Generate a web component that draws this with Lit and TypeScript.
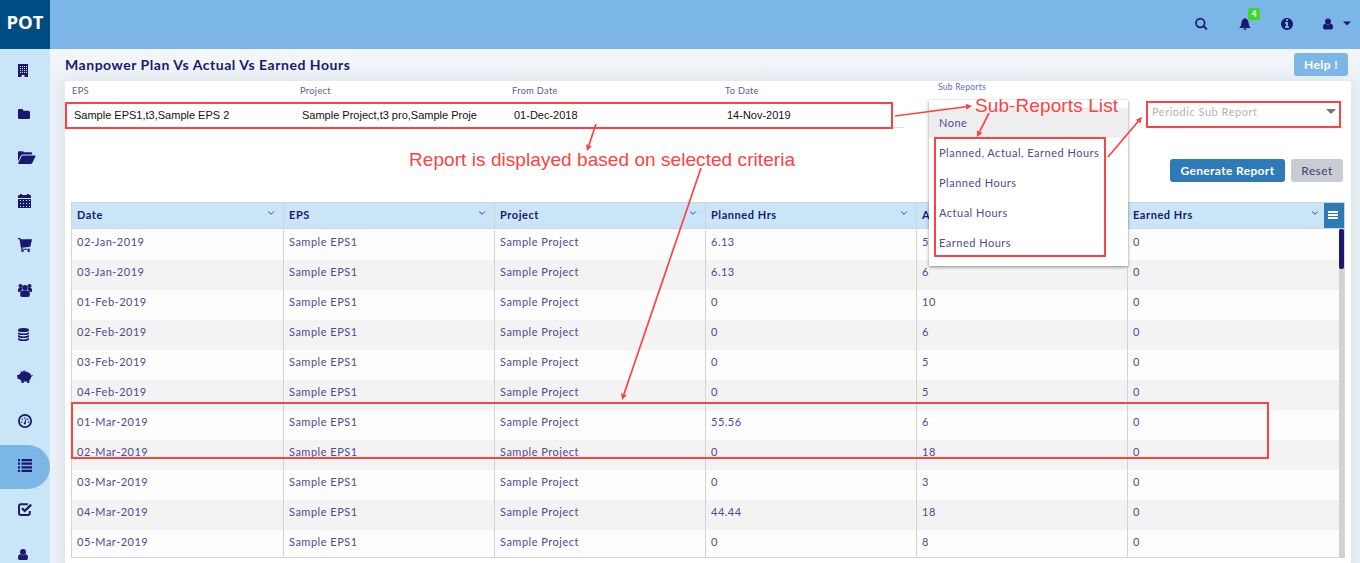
import { LitElement, html, css, svg } from "lit";
import { customElement } from "lit/decorators.js";

const icons = {
  building: svg`<path fill-rule="evenodd" d="M3 3h10v13H9.500v-2h-3v2H3zM5 5v1h1V5zm2 0v1h1V5zm2 0v1h1V5zm2 0v1h1V5zM5 7v1h1V7zm2 0v1h1V7zm2 0v1h1V7zm2 0v1h1V7zM5 9v1h1V9zm2 0v1h1V9zm2 0v1h1V9zm2 0v1h1V9zM5 11v1h1v-1zm2 0v1h1v-1zm2 0v1h1v-1zm2 0v1h1v-1z"/>`,
  folder: svg`<path d="M3 5.300Q3 4 4.300 4h2.600Q8.200 4 8.200 5.300V5.700h5.300Q15 5.700 15 7.200v5.300Q15 14 13.500 14h-9Q3 14 3 12.500z"/>`,
  folderOpen: svg`<path d="M3 12.300V3.500Q3 2.300 4.200 2.300h3.300Q8.700 2.300 8.700 3.300h7.100Q17.200 3.300 17.200 4.500v1H8Q6.500 5.500 5.800 6.700z"/><path d="M7.800 6.600h12.100q1 0 .5 1l-3 6.200q-.5 1.100-1.700 1.100H3.800q-1 0-.5-1l3-6.200q.5-1.100 1.500-1.100z"/>`,
  calendar: svg`<path fill-rule="evenodd" d="M3 3Q3 2 4 2h1V1h2v1h5V1h2v1h1q1 0 1 1v2H3zM3 6h13v9H3zM5 7v1h1V7zm3 0v1h1V7zm3 0v1h1V7zm3 0v1h1V7zM5 10v1h1v-1zm3 0v1h1v-1zm3 0v1h1v-1zm3 0v1h1v-1zM5 13v1h1v-1zm3 0v1h1v-1zm3 0v1h1v-1zm3 0v1h1v-1z"/>`,
  cart: svg`<path d="M3 1h2.300l.5 1.300H17l-1.700 7.400L7 10.700l.3 1H15v1H6.300L4.500 2.200H3z"/><circle cx="7.500" cy="13.900" r="1.200"/><circle cx="13.700" cy="13.900" r="1.200"/>`,
  users: svg`<circle cx="5.500" cy="5" r="2"/><circle cx="14.500" cy="5" r="2"/><path d="M3 10V8.500q0-1.500 1.500-1.500H7v2q-1.300.5-1.700 2H4Q3 11 3 10zm14 0V8.500Q17 7 15.500 7H13v2q1.300.5 1.700 2H16q1 0 1-1z"/><circle cx="10" cy="6.700" r="2.800"/><path d="M5.200 14v-1.500q0-3 2.500-3h4.600q2.500 0 2.500 3V14q0 2-1.800 2H7q-1.800 0-1.800-2z"/>`,
  database: svg`<path d="M3 5q0-2 5.500-2T14 5v.6q0 1.500-5.500 1.500T3 5.600zM3 7.200q2 1.400 5.500 1.400T14 7.200v1.300q0 1.500-5.500 1.500T3 8.500zm0 2.900q2 1.400 5.500 1.400t5.500-1.400v1.300q0 1.500-5.500 1.500T3 11.400zM3 13q2 1.400 5.500 1.400T14 13v1.200q0 1.800-5.500 1.800T3 14.200z"/>`,
  piggy: svg`<path d="M2 6h1.800Q4.500 4.500 6 3.900L5.600 2l2.600 1.100h3.300q3.500.2 4.400 3.100.8.600 1.300-.4l.5.400q-.2 1.500-1.600 1.500-.1 2.300-1.800 3.700V14H12v-1.500H8.700V14H6.400v-2.300Q5.200 11 4.400 10H2.700z"/><path d="M7.500 1.900q2-.9 4 0l-.4.900H8z"/>`,
  gauge: svg`<circle cx="10" cy="8" r="6.100" fill="none" stroke="currentColor" stroke-width="1.800"/><path d="m9.200 10 1.500-4.500.8.300-1 4.400z"/><circle cx="9.800" cy="10.400" r="1.100"/><circle cx="6.500" cy="9" r=".8"/><circle cx="7.400" cy="6.200" r=".8"/><circle cx="9.700" cy="4.700" r=".7"/><circle cx="12.800" cy="6.200" r=".8"/><circle cx="13.500" cy="9" r=".8"/>`,
  list: svg`<path d="M3 2h2v2.200H3zm3.500 0H17v2.200H6.500zM3 5.600h2v2.200H3zm3.500 0H17v2.200H6.500zM3 9.200h2v2.200H3zm3.500 0H17v2.200H6.500zM3 12.800h2V15H3zm3.500 0H17V15H6.500z"/>`,
  check: svg`<path d="M12.800 3.200H6Q4 3.200 4 5.200V12q0 2 2 2h6.800q2 0 2-2v-2" fill="none" stroke="currentColor" stroke-width="1.900"/><path d="m7 7.300 2.700 2.700L16.200 3.600" fill="none" stroke="currentColor" stroke-width="2.300"/>`,
  user: svg`<circle cx="8" cy="6.900" r="3"/><path d="M3 13.300Q3 9.200 5.300 9.200 8 11.400 10.700 9.200 13 9.200 13 13.300 13 15 11.300 15H4.700Q3 15 3 13.300z"/>`,
};
const nav = ["building", "folder", "folderOpen", "calendar", "cart", "users", "database", "piggy", "gauge", "list", "check", "user"] as const;

const columns = ["Date", "EPS", "Project", "Planned Hrs", "Actual Hrs", "Earned Hrs"];
const rows = [
  ["02-Jan-2019", "6.13", "5"],
  ["03-Jan-2019", "6.13", "6"],
  ["01-Feb-2019", "0", "10"],
  ["02-Feb-2019", "0", "6"],
  ["03-Feb-2019", "0", "5"],
  ["04-Feb-2019", "0", "5"],
  ["01-Mar-2019", "55.56", "6"],
  ["02-Mar-2019", "0", "18"],
  ["03-Mar-2019", "0", "3"],
  ["04-Mar-2019", "44.44", "18"],
  ["05-Mar-2019", "0", "8"],
];
const filters = [
  ["EPS", "Sample EPS1,t3,Sample EPS 2"],
  ["Project", "Sample Project,t3 pro,Sample Proje"],
  ["From Date", "01-Dec-2018"],
  ["To Date", "14-Nov-2019"],
];
const options = ["None", "Planned, Actual, Earned Hours", "Planned Hours", "Actual Hours", "Earned Hours"];
// x1, y1, x2, y2 of each callout arrow
const arrows = [
  [895, 116, 972, 106],
  [989, 113, 977, 137],
  [1108, 157, 1142, 117],
  [596, 124, 587, 151],
  [701, 168, 622, 400],
];

@customElement("app-root")
export class AppRoot extends LitElement {
  static styles = css`
    :host { display: block; position: relative; width: 1360px; height: 563px; overflow: hidden; font-family: Lato, sans-serif; color: #191970; background: #eff5f9; }
    * { box-sizing: border-box; }
    .shell { display: grid; grid-template: 49px 514px / 50px 1310px; }
    .logo { background: #004b82; color: #fff; font: bold 18.500px/44px "Open Sans", sans-serif; text-align: center; }
    .top { background: #7cb6e7; display: flex; justify-content: flex-end; align-items: center; padding: 0 9px 2px 0; }
    .top svg { display: block; }
    .tools { display: flex; align-items: center; }
    .bell { position: relative; margin: 0 29px 0 30px; }
    .badge { position: absolute; left: 10px; top: -9px; width: 12px; height: 12px; border-radius: 2px; background: #3bd82a; color: #fff; font: bold 9px/11px Lato, sans-serif; text-align: center; }
    .person { margin: 0 10px 0 30px; }
    .side { background: #cae5f8; overflow: hidden; }
    .item { height: 44px; display: flex; align-items: flex-start; padding: 12px 0 0 15px; }
    .item.active { background: #7cb6e7; border-radius: 0 22px 22px 0; }
    .side svg { display: block; width: 22px; height: 20px; }
    svg { fill: currentColor; }
    .main { padding: 0 9px 0 15px; background: linear-gradient(#f3f7fa, #ecf2f6 34px); overflow: hidden; }
    .title { display: flex; justify-content: space-between; height: 32px; }
    h1 { margin: 0; font-size: 14px; line-height: 32px; letter-spacing: .53px; font-weight: bold; }
    .help { margin: 4px 3px 0 0; width: 54px; height: 23px; border-radius: 3px; background: #7cb6e7; color: #fff; font-size: 12px; font-weight: bold; line-height: 23px; letter-spacing: .4px; text-align: center; }
    .card { background: #fff; height: 500px; border-radius: 4px; padding: 0 6px; box-shadow: 0 0 18px rgba(40, 80, 100, .1); }
    .filters { display: grid; grid-template-columns: 228px 212px 213px 213px 208px 198px; height: 47px; padding-left: 1px; }
    .field { display: flex; flex-direction: column; padding-top: 4px; margin-right: 10px; }
    .field.line { border-bottom: 1px solid #ddd; margin-right: 34px; }
    .field.line.wide { margin-right: 1px; }
    .label { font-size: 9.200px; line-height: 12px; letter-spacing: .35px; color: #5b5b95; }
    .label.up { margin-top: -4px; font-size: 8.500px; letter-spacing: .25px; color: #5c6bc0; }
    .value { font: 11px/15px "Liberation Sans", sans-serif; color: #111; margin: 11px 0 0 2px; white-space: nowrap; }
    .hint { display: flex; justify-content: space-between; align-items: flex-start; padding: 19px 7px 0 6px; font-size: 11px; line-height: 15px; letter-spacing: .52px; color: #b3b3b3; }
    .caret { margin-top: 5px; border: 5px solid transparent; border-top-color: #757575; border-bottom: 0; }
    .actions { display: flex; justify-content: flex-end; gap: 6px; padding: 31px 2px 0 0; height: 74px; }
    .btn { height: 23px; border-radius: 3px; font-size: 12px; line-height: 23px; letter-spacing: .4px; text-align: center; }
    .go { width: 115px; background: #2d7ab6; color: #fff; font-weight: bold; letter-spacing: .35px; }
    .reset { width: 52px; background: #c9ccd2; color: #3e3e78; }
    .grid { width: 1274px; height: 356px; border: 1px solid #d4d4d4; overflow: hidden; }
    .head { display: flex; height: 26px; background: #cae5f8; border-bottom: 1px solid #d4d4d4; }
    .th { width: 211px; flex: none; display: flex; justify-content: space-between; border-right: 1px solid #d4d4d4; padding: 0 8px 0 5px; font-size: 11px; font-weight: bold; line-height: 24px; letter-spacing: .55px; }
    .th svg { margin-top: 7px; opacity: .8; }
    .th:first-child, .td:first-child { width: 212px; }
    .th:last-of-type { width: 196px; border: 0; padding-right: 5px; }
    .menu { flex: 1; background: #2d7ab6; color: #fff; display: flex; align-items: center; justify-content: center; padding: 0 2px 1px 0; }
    .body { display: flex; height: 328px; }
    .rows { width: 1267px; padding-top: 1px; overflow: hidden; }
    .row { display: flex; height: 30px; background: #fdfdfd; }
    .row:nth-child(even) { background: #f3f3f3; }
    .td { width: 211px; flex: none; border-right: 1px solid #d4d4d4; padding-left: 5px; font-size: 11px; line-height: 24px; letter-spacing: .5px; color: #4b4b8f; }
    .td:last-child { border: 0; width: 200px; }
    .track { width: 5px; background: #d2d2d2; }
    .thumb { height: 40px; border-radius: 2px; background: #191970; }
    .popup { position: absolute; left: 929px; top: 100px; width: 199px; height: 166px; padding-top: 8px; background: #fff; box-shadow: 0 1px 3px rgba(0, 0, 0, .45); }
    .opt { height: 30px; padding-left: 10px; font-size: 11px; line-height: 30px; letter-spacing: .5px; color: #4b4b8f; white-space: nowrap; }
    .opt:first-child { background: #eee; }
    .notes { position: absolute; left: 0; top: 0; }
    .notes text { font: 19px "Liberation Sans", sans-serif; fill: #fc4343; }
    .mark { fill: none; stroke: #fc4343; stroke-width: 2; }
    .mark.thin { stroke-width: 1.700; }
    .head-mark { fill: #fc4343; }
  `;

  arrow([x1, y1, x2, y2]: number[]) {
    const len = Math.hypot(x2 - x1, y2 - y1);
    const ux = (x2 - x1) / len, uy = (y2 - y1) / len;
    const bx = x2 - ux * 6, by = y2 - uy * 6;
    return svg`<path class="mark thin" d="M${x1} ${y1}L${bx} ${by}"/>
      <path class="head-mark" d="M${x2} ${y2}L${bx - uy * 3} ${by + ux * 3}L${bx + uy * 3} ${by - ux * 3}z"/>`;
  }

  render() {
    return html`
      <div class="shell">
        <div class="logo">POT</div>
        <header class="top">
          <div class="tools">
            <svg width="14" height="14" viewBox="0 0 14 14"><circle cx="6.300" cy="6" r="4.300" fill="none" stroke="currentColor" stroke-width="1.700"/><path d="m9.300 9 3.700 3.400" stroke="currentColor" stroke-width="1.900"/></svg>
            <div class="bell">
              <svg width="14" height="14" viewBox="0 0 14 14"><path d="M6.300 1h1.400v.8Q10.600 2.600 10.600 6q0 3.400 2.200 5H1.200Q3.400 9.400 3.400 6q0-3.400 2.900-4.200zM5.500 11.500h3Q8.500 13 7 13t-1.500-1.500z"/></svg>
              <span class="badge">4</span>
            </div>
            <svg width="12" height="12" viewBox="128 128 1536 1536"><path d="M1152 1376v-160q0-14-9-23t-23-9h-96v-512q0-14-9-23t-23-9h-320q-14 0-23 9t-9 23v160q0 14 9 23t23 9h96v320h-96q-14 0-23 9t-9 23v160q0 14 9 23t23 9h448q14 0 23-9t9-23zm-128-896v-160q0-14-9-23t-23-9h-192q-14 0-23 9t-9 23v160q0 14 9 23t23 9h192q14 0 23-9t9-23zm640 416q0 209-103 385.500t-279.500 279.500-385.500 103-385.500-103-279.500-279.500-103-385.500 103-385.500 279.500-279.500 385.500-103 385.500 103 279.500 279.500 103 385.500z"/></svg>
            <svg class="person" width="10" height="12" viewBox="3 3.500 10 12">${icons.user}</svg>
            <svg width="8" height="5" viewBox="0 0 8 5"><path d="M0 .5h8L4 4.500z"/></svg>
          </div>
        </header>
        <nav class="side">
          ${nav.map((n) => html`<div class="item ${n === "list" ? "active" : ""}"><svg viewBox="0 0 22 20">${icons[n]}</svg></div>`)}
        </nav>
        <main class="main">
          <div class="title"><h1>Manpower Plan Vs Actual Vs Earned Hours</h1><div class="help">Help !</div></div>
          <section class="card">
            <div class="filters">
              ${filters.map(([l, v]) => html`<div class="field line"><span class="label">${l}</span><span class="value">${v}</span></div>`)}
              <div class="field"><span class="label up">Sub Reports</span></div>
              <div class="field line wide"><div class="hint">Periodic Sub Report<i class="caret"></i></div></div>
            </div>
            <div class="actions"><div class="btn go">Generate Report</div><div class="btn reset">Reset</div></div>
            <div class="grid">
              <div class="head">
                ${columns.map((c) => html`<div class="th">${c}<svg width="8" height="6" viewBox="0 0 8 6"><path d="M1.200 1.500 4 4.300 6.800 1.500" fill="none" stroke="currentColor"/></svg></div>`)}
                <span class="menu"><svg width="10" height="10" viewBox="0 0 10 10"><path d="M0 1h10v2H0zm0 3h10v2H0zM0 7h10v2H0z"/></svg></span>
              </div>
              <div class="body">
                <div class="rows">
                  ${rows.map(([d, p, a]) => html`<div class="row">${[d, "Sample EPS1", "Sample Project", p, a, "0"].map((t) => html`<div class="td">${t}</div>`)}</div>`)}
                </div>
                <div class="track"><div class="thumb"></div></div>
              </div>
            </div>
          </section>
        </main>
      </div>
      <div class="popup">${options.map((o) => html`<div class="opt">${o}</div>`)}</div>
      <svg class="notes" width="1360" height="563">
        <rect class="mark" x="66" y="103" width="826" height="25"/>
        <rect class="mark" x="935" y="138" width="170" height="118"/>
        <rect class="mark" x="1147" y="102" width="193" height="25"/>
        <rect class="mark" x="72" y="403" width="1196" height="55"/>
        ${arrows.map((a) => this.arrow(a))}
        <text x="975" y="112" textLength="143">Sub-Reports List</text>
        <text x="409" y="166" textLength="386">Report is displayed based on selected criteria</text>
      </svg>`;
  }
}
